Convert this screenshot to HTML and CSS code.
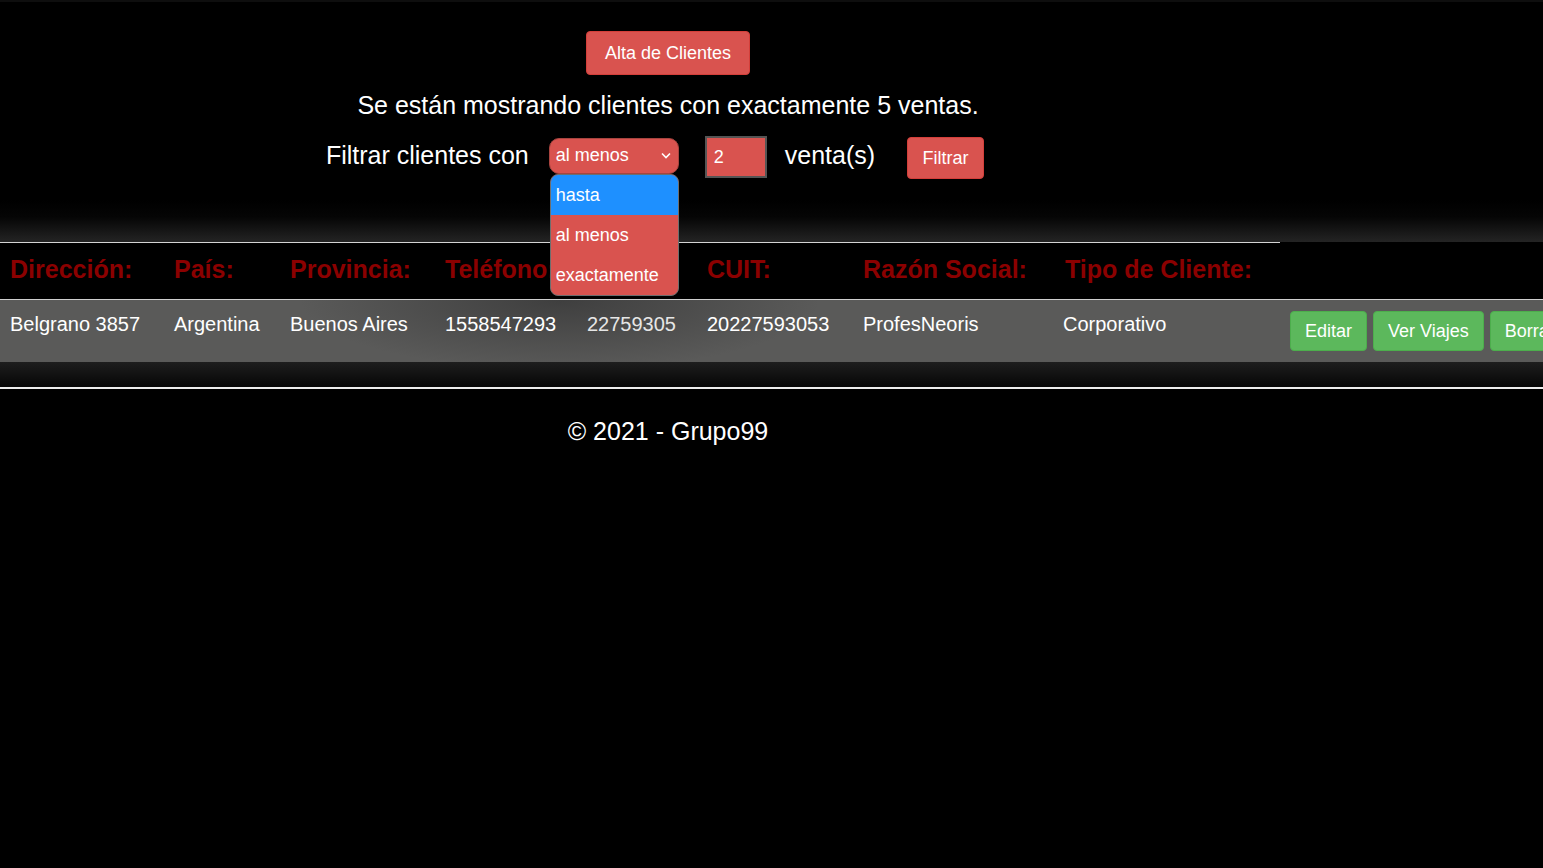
FILE: index.html
```html
<!DOCTYPE html>
<html lang="es">
<head>
<meta charset="utf-8">
<title>Clientes</title>
<link rel="stylesheet" href="styles.css">
</head>
<body>
<div class="topline"></div>
<section class="top">
  <button class="btn btn-red btn-alta">Alta de Clientes</button>
  <p class="status">Se están mostrando clientes con exactamente 5 ventas.</p>
  <form class="filter">
    <span class="label">Filtrar clientes con</span>
    <div class="select">
      <span class="select-value">al menos</span>
      <svg class="chev" width="10" height="7" viewBox="0 0 10 7"><path d="M1 1.5 L5 5.5 L9 1.5" fill="none" stroke="#fff" stroke-width="1.6"/></svg>
      <ul class="options">
        <li class="opt active">hasta</li>
        <li class="opt">al menos</li>
        <li class="opt">exactamente</li>
      </ul>
    </div>
    <input class="num" type="text" value="2">
    <span class="label label-ventas">venta(s)</span>
    <button type="button" class="btn btn-red btn-filtrar">Filtrar</button>
  </form>
</section>
<div class="band-top"></div>
<div class="table-wrap">
  <table class="clients">
    <thead>
      <tr>
        <th class="c1">Dirección:</th>
        <th class="c2">País:</th>
        <th class="c3">Provincia:</th>
        <th class="c4">Teléfono:</th>
        <th class="c5">DNI:</th>
        <th class="c6">CUIT:</th>
        <th class="c7">Razón Social:</th>
        <th class="c8">Tipo de Cliente:</th>
      </tr>
    </thead>
    <tbody>
      <tr class="row">
        <td>Belgrano 3857</td>
        <td>Argentina</td>
        <td>Buenos Aires</td>
        <td>1558547293</td>
        <td class="dni">22759305</td>
        <td>20227593053</td>
        <td>ProfesNeoris</td>
        <td class="tipo">Corporativo</td>
        <td class="actions">
          <div class="btns">
            <button class="btn btn-green">Editar</button>
            <button class="btn btn-green">Ver Viajes</button>
            <button class="btn btn-green">Borrar</button>
          </div>
        </td>
      </tr>
    </tbody>
  </table>
</div>
<div class="band-bottom"></div>
<footer class="footer">
  <p>© 2021 - Grupo99</p>
</footer>
</body>
</html>
```

FILE: styles.css
```css
html, body {
  margin: 0;
  padding: 0;
  background: #000;
  color: #fff;
  font-family: "Liberation Sans", Arial, sans-serif;
  overflow-x: hidden;
}

.topline {
  height: 2px;
  background: #0e0e0e;
}

.top {
  width: 1336px;
  text-align: center;
}

.btn {
  font-family: "Liberation Sans", Arial, sans-serif;
  font-size: 18px;
  color: #fff;
  border-radius: 4px;
  cursor: pointer;
  white-space: nowrap;
}

.btn-red {
  background: #d9534f;
  border: 1px solid #d43f3a;
}

.btn-alta {
  margin-top: 29px;
  height: 44px;
  padding: 0 18px;
}

.status {
  margin: 15px 0 0;
  font-size: 25px;
  line-height: 30px;
}

.filter {
  width: 1310px;
  margin-top: 16px;
  display: flex;
  justify-content: center;
  align-items: center;
  height: 42px;
}

.label {
  font-size: 25px;
  line-height: 30px;
  margin-right: 20px;
  margin-bottom: 5px;
  white-space: nowrap;
}

.label-ventas {
  margin-right: 32px;
}

.select {
  position: relative;
  width: 130px;
  height: 36px;
  box-sizing: border-box;
  background: #d9534f;
  border: 1px solid #a8443f;
  border-radius: 10px;
  display: flex;
  align-items: center;
  justify-content: space-between;
  padding: 0 7px 0 6px;
  margin-right: 26px;
  margin-bottom: 3px;
}

.select-value {
  font-size: 18px;
}

.chev {
  display: block;
}

.options {
  position: absolute;
  top: 35px;
  left: 0;
  width: 127px;
  margin: 0;
  padding: 0;
  list-style: none;
  text-align: left;
  background: #d9534f;
  border: 1px solid #6e6e6e;
  border-radius: 8px;
  overflow: hidden;
  z-index: 5;
}

.opt {
  height: 40px;
  line-height: 40px;
  padding-left: 5px;
  font-size: 18px;
}

.opt.active {
  background: #1e90ff;
}

.num {
  width: 62px;
  height: 42px;
  box-sizing: border-box;
  background: #d9534f;
  border: 2px solid #555;
  color: #fff;
  font-family: "Liberation Sans", Arial, sans-serif;
  font-size: 18px;
  padding: 0 7px;
  margin-right: 18px;
  outline: none;
}

.btn-filtrar {
  height: 42px;
  width: 77px;
  padding: 0;
  margin-top: 2px;
}

.band-top {
  margin-top: 22px;
  height: 42px;
  background: linear-gradient(to bottom, #000 0%, #050505 40%, #242424 100%);
}

.table-wrap {
  width: 100%;
  overflow: hidden;
}

.clients {
  border-collapse: collapse;
  table-layout: fixed;
  width: 1600px;
}

.clients th {
  color: #8b0000;
  font-size: 25px;
  font-weight: bold;
  line-height: 30px;
  text-align: left;
  padding: 11px 0 15px 10px;
  border-top: 1px solid #d4d4d4;
  white-space: nowrap;
  overflow: hidden;
}

.c1 { width: 154px; }
.c2 { width: 106px; }
.c3 { width: 145px; }
.c4 { width: 132px; }
.c5 { width: 110px; }
.c6 { width: 146px; }
.c7 { width: 192px; }
.c8 { width: 215px; }

.row {
  background:
    radial-gradient(ellipse 260px 70px at 560px 0px, rgba(60, 60, 60, 0.9), rgba(60, 60, 60, 0) 100%),
    #5a5a59;
}

.row td {
  font-size: 20px;
  line-height: 22px;
  padding: 13px 0 0 10px;
  vertical-align: top;
  border-top: 1px solid #cfcfcf;
  white-space: nowrap;
}

.row td.dni {
  color: #e6e6e6;
}

.row td.tipo {
  padding-left: 8px;
}

.row td.actions {
  padding: 11px 0 11px 10px;
  width: 320px;
}

.btns {
  display: flex;
  gap: 6px;
}

.btn-green {
  background: #5cb85c;
  border: 1px solid #4cae4c;
  height: 40px;
  padding: 0 14px;
}

.band-bottom {
  height: 25px;
  background: linear-gradient(to bottom, #1e1e1e 0%, #060606 100%);
  border-bottom: 2px solid #ececec;
}

.footer {
  width: 1336px;
  text-align: center;
}

.footer p {
  margin: 27px 0 0;
  font-size: 25px;
  line-height: 30px;
}
```
